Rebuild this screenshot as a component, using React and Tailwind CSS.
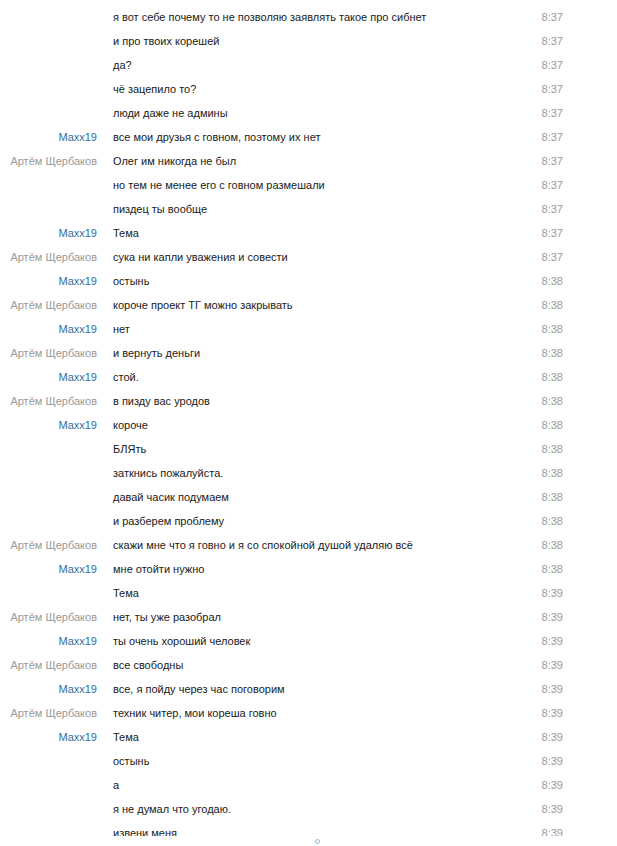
import React from 'react';

const A = 'Артём Щербаков';
const M = 'Maxx19';

const rows = [
  ['', 'я вот себе почему то не позволяю заявлять такое про сибнет', '8:37'],
  ['', 'и про твоих корешей', '8:37'],
  ['', 'да?', '8:37'],
  ['', 'чё зацепило то?', '8:37'],
  ['', 'люди даже не админы', '8:37'],
  [M, 'все мои друзья с говном, поэтому их нет', '8:37'],
  [A, 'Олег им никогда не был', '8:37'],
  ['', 'но тем не менее его с говном размешали', '8:37'],
  ['', 'пиздец ты вообще', '8:37'],
  [M, 'Тема', '8:37'],
  [A, 'сука ни капли уважения и совести', '8:37'],
  [M, 'остынь', '8:38'],
  [A, 'короче проект ТГ можно закрывать', '8:38'],
  [M, 'нет', '8:38'],
  [A, 'и вернуть деньги', '8:38'],
  [M, 'стой.', '8:38'],
  [A, 'в пизду вас уродов', '8:38'],
  [M, 'короче', '8:38'],
  ['', 'БЛЯть', '8:38'],
  ['', 'заткнись пожалуйста.', '8:38'],
  ['', 'давай часик подумаем', '8:38'],
  ['', 'и разберем проблему', '8:38'],
  [A, 'скажи мне что я говно и я со спокойной душой удаляю всё', '8:38'],
  [M, 'мне отойти нужно', '8:38'],
  ['', 'Тема', '8:39'],
  [A, 'нет, ты уже разобрал', '8:39'],
  [M, 'ты очень хороший человек', '8:39'],
  [A, 'все свободны', '8:39'],
  [M, 'все, я пойду через час поговорим', '8:39'],
  [A, 'техник читер, мои кореша говно', '8:39'],
  [M, 'Тема', '8:39'],
  ['', 'остынь', '8:39'],
  ['', 'а', '8:39'],
  ['', 'я не думал что угодаю.', '8:39'],
  ['', 'извени меня', '8:39'],
];

function Row({ name, text, time }) {
  const nameColor = name === M ? 'text-[#2f6ea5]' : 'text-[#999999]';
  return (
    <div className="flex items-center h-6 leading-6">
      <div className={`w-[97px] shrink-0 text-right whitespace-nowrap ${nameColor}`}>{name}</div>
      <div className="w-[427px] shrink-0 pl-4 text-[#1a1a1a] whitespace-nowrap">{text}</div>
      <div className="w-[39px] shrink-0 text-right text-[#999999]">{time}</div>
    </div>
  );
}

export default function App() {
  return (
    <div className="w-[617px] h-[846px] bg-white text-[11px] font-['Liberation_Sans',Arial,sans-serif]">
      <div className="h-[836px] overflow-hidden pt-[5px]">
        {rows.map((r, i) => (
          <Row key={i} name={r[0]} text={r[1]} time={r[2]} />
        ))}
      </div>
      <div className="flex justify-center pl-[18px] pt-[3px]">
        <div className="w-[5px] h-[5px] rounded-full border border-[#8fb6d6]" />
      </div>
    </div>
  );
}
